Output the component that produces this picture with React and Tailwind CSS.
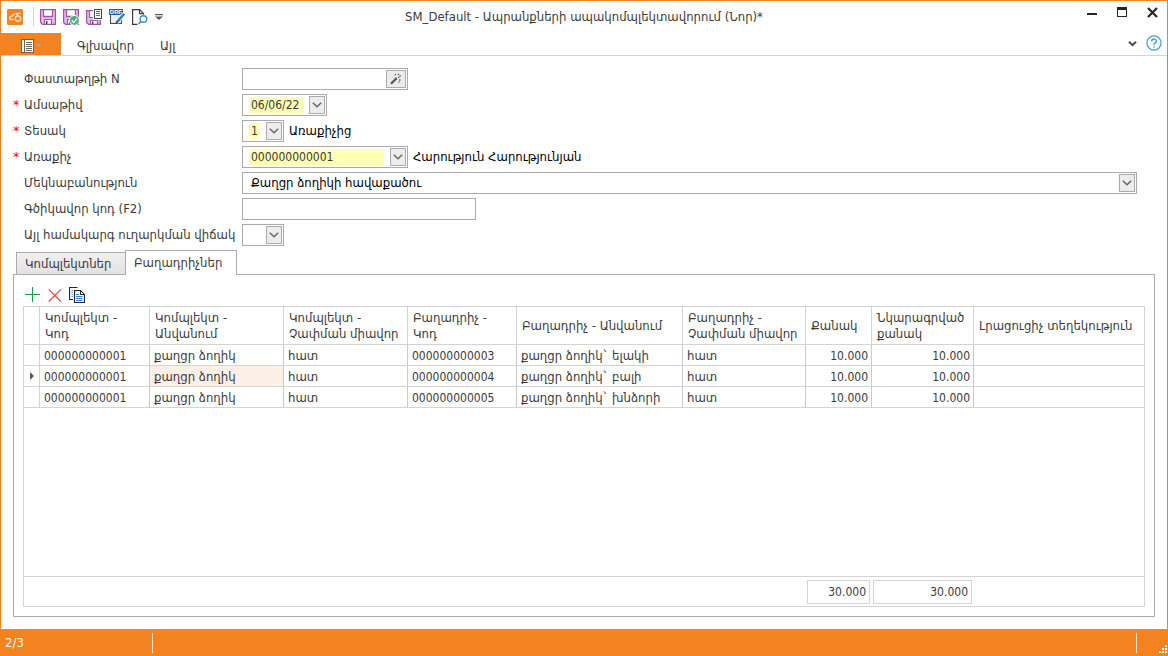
import React from "react";

function LogoIcon() {
  return (
    <svg viewBox="0 0 16 16" className="size-4">
      <rect width="16" height="16" rx="1.5" fill="#f58220" />
      <path d="M7.6 5.2 2.6 8.4 3.2 10.6H7" fill="none" stroke="#fbd9b9" strokeWidth="1.5" />
      <circle cx="11" cy="9.6" r="2.7" fill="none" stroke="#fbd9b9" strokeWidth="1.5" />
      <path d="M8.4 4.4H13.8M9.2 4.6 11 7" fill="none" stroke="#fbd9b9" strokeWidth="1.4" />
    </svg>
  );
}

function Floppy() {
  return (
    <g>
      <path d="M0.6 0.6H15.4V15.4H2.6L0.6 13.4Z" fill="#e3c1e4" stroke="#a056a3" strokeWidth="1.3" />
      <path d="M3.5 0.6H12.5V7.5H3.5Z" fill="#fff" stroke="#a056a3" strokeWidth="1.3" />
      <path d="M4.5 10.5H11.5V15.4H4.5Z" fill="#fff" stroke="#a056a3" strokeWidth="1.2" />
      <rect x="6" y="12" width="1.4" height="3" fill="#3b3b3b" />
    </g>
  );
}

function SaveIcon() {
  return (
    <svg viewBox="0 0 16 16" className="size-4">
      <Floppy />
    </svg>
  );
}

function SaveCheckIcon() {
  return (
    <svg viewBox="0 0 16 16" className="size-4">
      <Floppy />
      <circle cx="11.4" cy="11.4" r="5.3" fill="#fff" />
      <circle cx="11.4" cy="11.4" r="4.5" fill="#4caf7d" />
      <path d="M8.8 11.4 10.8 13.4 14 9.6" fill="none" stroke="#fff" strokeWidth="1.4" />
    </svg>
  );
}

function SaveListIcon() {
  return (
    <svg viewBox="0 0 16 16" className="size-4">
      <path d="M0.6 1.6H14.4V15.4H2.6L0.6 13.4Z" fill="#e3c1e4" stroke="#a056a3" strokeWidth="1.3" />
      <path d="M3.5 1.6H8V8.5H3.5Z" fill="#fff" stroke="#a056a3" strokeWidth="1.2" />
      <path d="M4.5 11.5H11.5V15.4H4.5Z" fill="#fff" stroke="#a056a3" strokeWidth="1.2" />
      <rect x="6" y="12.5" width="1.4" height="2.5" fill="#3b3b3b" />
      <rect x="7" y="0" width="9" height="11" fill="#fff" />
      <rect x="8.5" y="0.5" width="7" height="9" fill="#fff" stroke="#34495e" />
      <path d="M10 2.5H14M10 4.5H14M10 6.5H14" stroke="#2f7fc1" />
    </svg>
  );
}

function DraftIcon() {
  return (
    <svg viewBox="0 0 16 16" className="size-4">
      <rect x="1.5" y="5.5" width="11" height="9" fill="#ededed" stroke="#4a4a4a" />
      <rect width="14" height="6" fill="#1f5f99" />
      <text x="7" y="5.3" textAnchor="middle" fill="#fff" fontSize="6" fontWeight="700" fontFamily="Liberation Sans">
        DRF
      </text>
      <path d="M15 5 7.6 13.4" stroke="#fff" strokeWidth="4.4" />
      <path d="M15.2 4.8 8.2 12.8" stroke="#2f7fc1" strokeWidth="2.6" />
      <path d="M6.2 15 7.2 11.8 9.2 13.6Z" fill="#34495e" />
    </svg>
  );
}

function PreviewIcon() {
  return (
    <svg viewBox="0 0 16 16" className="size-4">
      <path d="M5.5 15.4H0.6V0.6H7.5L11.5 4.6V5.5" fill="none" stroke="#3b3b3b" strokeWidth="1.2" />
      <path d="M7.5 0.6V4.6H11.5" fill="none" stroke="#3b3b3b" strokeWidth="1.2" />
      <circle cx="11.4" cy="10" r="3.3" fill="#fff" stroke="#3d8fc9" strokeWidth="1.4" />
      <path d="M9 12.4 6.6 15" stroke="#3d8fc9" strokeWidth="1.7" />
    </svg>
  );
}

function Chevron() {
  return (
    <svg viewBox="0 0 10 6" className="h-[6px] w-[10px]">
      <path d="M0.8 0.8 5 4.8 9.2 0.8" fill="none" stroke="#666" strokeWidth="1.5" />
    </svg>
  );
}

function WandIcon() {
  return (
    <svg viewBox="0 0 12 12" className="size-3">
      <path d="M1 10.8 6.8 5" stroke="#555" strokeWidth="2.2" />
      <path d="M4.6 1.6H6M7.6 1.4H9.2M9.4 3H10.8M8 4.4H9.4M9 7H10.6M8.6 9H9.6" stroke="#666" strokeWidth="1.4" />
    </svg>
  );
}

const quickTools = [
  ["Պահպանել", SaveIcon],
  ["Պահպանել և հաստատել", SaveCheckIcon],
  ["Պահպանել որպես", SaveListIcon],
  ["Սևագիր", DraftIcon],
  ["Դիտել", PreviewIcon],
];

const stepButton =
  "flex h-[18px] w-4 shrink-0 items-center justify-center border border-[#ababab] bg-[#ececec]";
const fieldBox = "flex h-[22px] items-center border border-[#ababab] bg-white";

function Select({ id, width, textClass, value }) {
  return (
    <div className={`relative ${fieldBox} ${width}`}>
      <select
        id={id}
        defaultValue={value}
        className={`h-4 w-full appearance-none bg-clip-content pr-[23px] pl-[6px] indent-[2px] leading-4 outline-none ${textClass}`}
      >
        <option value={value}>{value}</option>
      </select>
      <span className={`pointer-events-none absolute top-px right-px ${stepButton}`}>
        <Chevron />
      </span>
    </div>
  );
}

function Row({ id, label, required, children }) {
  return (
    <div className="flex h-[22px] items-center">
      <span className="w-[11px] shrink-0 font-['DejaVu_Sans',sans-serif] text-[#f00]">{required ? "*" : ""}</span>
      <label htmlFor={id} className="w-[218px] shrink-0 whitespace-nowrap">
        {label}
      </label>
      {children}
    </div>
  );
}

const columns = [
  ["Կոմպլեկտ - Կոդ", "w-[110px]"],
  ["Կոմպլեկտ - Անվանում", "w-[134px]"],
  ["Կոմպլեկտ - Չափման միավոր", "w-[124px]"],
  ["Բաղադրիչ - Կոդ", "w-[109px]"],
  ["Բաղադրիչ - Անվանում", "w-[166px]"],
  ["Բաղադրիչ - Չափման միավոր", "w-[123px]"],
  ["Քանակ", "w-[66px]"],
  ["Նկարագրված քանակ", "w-[102px]"],
  ["Լրացուցիչ տեղեկություն", ""],
];

const cellStyles = {
  0: "pl-1 text-[12px]",
  3: "pl-1 text-[12px]",
  6: "pr-[3px] text-right text-[12px]",
  7: "pr-[3px] text-right text-[12px]",
};

const rows = [
  ["000000000001", "քաղցր ձողիկ", "հատ", "000000000003", "քաղցր ձողիկ` ելակի", "հատ", "10.000", "10.000", ""],
  ["000000000001", "քաղցր ձողիկ", "հատ", "000000000004", "քաղցր ձողիկ` բալի", "հատ", "10.000", "10.000", ""],
  ["000000000001", "քաղցր ձողիկ", "հատ", "000000000005", "քաղցր ձողիկ` խնձորի", "հատ", "10.000", "10.000", ""],
];

export default function App() {
  return (
    <div className="flex min-h-screen flex-col border-x border-t border-[#f58220] bg-white font-['DejaVu_Sans_Condensed','DejaVu_Sans',sans-serif] text-[13px] leading-4 text-[#3b3b3b]">
      <header className="grid h-8 grid-cols-[1fr_auto_1fr] items-center">
        <div className="flex items-center pl-[6px]">
          <LogoIcon />
          <span className="ml-[10px] mr-[6px] h-5 w-px bg-[#d4d4d4]" />
          <div className="flex items-center gap-[7px]">
            {quickTools.map(([name, Icon]) => (
              <button key={name} type="button" aria-label={name}>
                <Icon />
              </button>
            ))}
            <button type="button" aria-label="Կարգավորել">
              <svg viewBox="0 0 8 6" className="h-[6px] w-2">
                <path d="M0 0H8V1.2H0ZM0 2.4H8L4 6Z" fill="#5a5a5a" />
              </svg>
            </button>
          </div>
        </div>
        <h1>SM_Default - Ապրանքների ապակոմպլեկտավորում (Նոր)*</h1>
        <div className="flex justify-end self-start pt-[6px]">
          <button type="button" aria-label="Ծալել" className="flex w-[30px] justify-center">
            <svg viewBox="0 0 11 11" className="size-[11px]">
              <path d="M0 6H10V8H0Z" fill="#262626" />
            </svg>
          </button>
          <button type="button" aria-label="Մեծացնել" className="flex w-[30px] justify-center">
            <svg viewBox="0 0 11 11" className="size-[11px]" shapeRendering="crispEdges">
              <path d="M0.5 0.5H9.5V9.5H0.5Z" fill="none" stroke="#262626" />
              <path d="M0 0H10V3H0Z" fill="#262626" />
            </svg>
          </button>
          <button type="button" aria-label="Փակել" className="flex w-[30px] justify-center">
            <svg viewBox="0 0 11 11" className="size-[11px]">
              <path d="M1 1 10 10M10 1 1 10" stroke="#262626" strokeWidth="2.2" />
            </svg>
          </button>
        </div>
      </header>

      <nav className="flex h-[23px] items-center border-b border-[#d4d4d4]">
        <button type="button" aria-label="Ցանկ" className="flex h-[22px] w-[60px] items-center gap-[2px] bg-[#f58220] pt-[3px] pl-5">
          <svg viewBox="0 0 13 14" className="h-[14px] w-[13px]" shapeRendering="crispEdges">
            <path d="M0.5 0.5H12.5V13.5H0.5Z" fill="#fff" stroke="#6e6257" />
            <path d="M3.5 0V14" stroke="#6e6257" />
            <path d="M5 3.5H11M5 5.5H11M5 7.5H11M5 9.5H11M5 11.5H11" stroke="#6e6257" />
          </svg>
          <svg viewBox="0 0 5 3" className="h-[3px] w-[5px]">
            <path d="M0 0H5L2.5 3Z" fill="#a8a8a8" />
          </svg>
        </button>
        <a href="#main" className="pt-[3px] pl-4">Գլխավոր</a>
        <a href="#other" className="pt-[3px] pl-[26px]">Այլ</a>
        <button type="button" aria-label="Ծալել ժապավենը" className="ml-auto pr-[9px]">
          <svg viewBox="0 0 9 6" className="h-[6px] w-[9px]">
            <path d="M1 0.8 4.5 4.2 8 0.8" fill="none" stroke="#4a4a4a" strokeWidth="2" />
          </svg>
        </button>
        <button type="button" aria-label="Օգնություն" className="self-start pr-[5px] pt-[2px]">
          <svg viewBox="0 0 16 16" className="size-4">
            <circle cx="8" cy="8" r="7.1" fill="#fff" stroke="#4a9fd8" strokeWidth="1.3" />
            <path
              d="M5.6 6.2C5.6 3.2 10.4 3.2 10.4 6.1C10.4 8 8 7.8 8 10M8 11.2V12.6"
              fill="none"
              stroke="#4a9fd8"
              strokeWidth="1.4"
            />
          </svg>
        </button>
      </nav>

      <main className="flex flex-1 flex-col p-3">
        <form className="flex flex-col gap-1">
          <Row id="doc" label="Փաստաթղթի N">
            <div className={`${fieldBox} w-[166px] pr-px`}>
              <input id="doc" className="h-4 min-w-0 flex-1 px-2 outline-none" />
              <button type="button" aria-label="Լրացնել" className="flex h-[18px] w-5 items-center justify-center border border-[#ababab] bg-[#ececec]">
                <WandIcon />
              </button>
            </div>
          </Row>
          <Row id="date" label="Ամսաթիվ" required>
            <div className={`${fieldBox} w-[85px] pr-px pl-[6px]`}>
              <input id="date" defaultValue="06/06/22" className="mr-[5px] h-4 min-w-0 flex-1 bg-[#ffffb4] pl-[2px] text-[12px] outline-none" />
              <button type="button" aria-label="Ընտրել ամսաթիվը" className={stepButton}>
                <Chevron />
              </button>
            </div>
          </Row>
          <Row id="kind" label="Տեսակ" required>
            <Select id="kind" width="w-[42px]" textClass="bg-[#ffffb4] text-[12px]" value="1" />
            <span className="pl-[5px] text-black">Առաքիչից</span>
          </Row>
          <Row id="sender" label="Առաքիչ" required>
            <Select id="sender" width="w-[166px]" textClass="bg-[#ffffb4] text-[12px]" value="000000000001" />
            <span className="pl-[5px] text-black">Հարություն Հարությունյան</span>
          </Row>
          <Row id="comment" label="Մեկնաբանություն">
            <Select id="comment" width="mr-[18px] flex-1" textClass="text-black" value="Քաղցր ձողիկի հավաքածու" />
          </Row>
          <Row id="barcode" label="Գծիկավոր կոդ (F2)">
            <input id="barcode" className={`${fieldBox} w-[234px] px-2 outline-none`} />
          </Row>
          <Row id="state" label="Այլ համակարգ ուղարկման վիճակ">
            <Select id="state" width="w-[42px]" textClass="" value="" />
          </Row>
        </form>

        <div role="tablist" className="z-10 mt-1 -mb-px flex items-end pl-[3px]">
          <button type="button" role="tab" aria-selected="false" className="h-[23px] w-[109px] border border-r-0 border-[#ababab] bg-linear-to-b from-[#f0f0f0] to-[#e2e2e2] pl-2 text-left whitespace-nowrap">
            Կոմպլեկտներ
          </button>
          <button type="button" role="tab" aria-selected="true" className="h-[25px] w-28 border border-b-0 border-[#ababab] bg-white pl-2 text-left whitespace-nowrap">
            Բաղադրիչներ
          </button>
        </div>

        <section className="flex flex-1 flex-col border border-[#ababab] px-[9px] pt-3 pb-[9px]">
          <div className="flex h-[19px] items-start gap-[7px] pl-[2px]">
            <button type="button" aria-label="Ավելացնել">
              <svg viewBox="0 0 16 16" className="size-4" shapeRendering="crispEdges">
                <path d="M0 7.5H15M7.5 0V15" stroke="#11a04a" />
              </svg>
            </button>
            <button type="button" aria-label="Ջնջել">
              <svg viewBox="0 0 15 16" className="h-4 w-[14px]">
                <path d="M0.8 2 13.8 15M13.8 2 0.8 15" stroke="#e8474a" strokeWidth="1.3" />
              </svg>
            </button>
            <button type="button" aria-label="Պատճենել">
              <svg viewBox="0 0 16 16" className="size-4">
                <path d="M4 12.5H0.5V0.5H8.5" fill="none" stroke="#262626" strokeWidth="1.2" />
                <path d="M2.5 3.5H4M2.5 5.5H4M2.5 7.5H4M2.5 9.5H4" stroke="#5b9bd0" />
                <path d="M5.5 3.5H11.5L15.5 7.5V15.5H5.5Z" fill="#fff" stroke="#262626" strokeWidth="1.2" />
                <path d="M11.5 3.5V7.5H15.5Z" fill="#fff" stroke="#262626" />
                <path d="M7 7.5H10M7 9.5H13.5M7 11.5H13.5M7 13.5H13.5" stroke="#2f7fc1" />
              </svg>
            </button>
          </div>

          <div className="flex flex-1 flex-col border border-[#d4d4d4]">
            <table className="w-full table-fixed border-separate border-spacing-0">
              <thead>
                <tr className="h-[38px]">
                  <th aria-label="Նշիչ" className="w-4 border-r border-b border-[#d4d4d4]" />
                  {columns.map(([title, width]) => (
                    <th key={title} className={`border-r border-b border-[#d4d4d4] py-0 pr-[5px] pl-[5px] text-left font-normal last:border-r-0 ${width}`}>
                      {title}
                    </th>
                  ))}
                </tr>
              </thead>
              <tbody>
                {rows.map((row, r) => (
                  <tr key={r} className="h-[21px]">
                    <td className="border-r border-b border-[#d4d4d4] p-0">
                      {r === 1 && (
                        <svg viewBox="0 0 4 8" className="ml-[6px] h-2 w-1">
                          <path d="M0 0 4 4 0 8Z" fill="#5a5a5a" />
                        </svg>
                      )}
                    </td>
                    {row.map((text, c) => (
                      <td
                        key={c}
                        className={`border-r border-b border-r-[#c3ccd6] border-b-[#d4d4d4] pt-px pb-0 whitespace-nowrap last:border-r-0 ${
                          cellStyles[c] ?? "pl-1"
                        } ${r === 1 && c === 1 ? "bg-[#fcefe6]" : ""}`}
                      >
                        {text}
                      </td>
                    ))}
                  </tr>
                ))}
              </tbody>
            </table>
            <div className="mt-auto grid h-[30px] grid-cols-[783px_66px_99px_1fr] border-t border-[#d4d4d4] pt-[3px] text-[12px]">
              <output className="col-start-2 mr-[3px] flex h-6 items-center justify-end border border-[#d4d4d4] pr-[3px]">30.000</output>
              <output className="flex h-6 items-center justify-end border border-[#d4d4d4] pr-[3px]">30.000</output>
            </div>
          </div>
        </section>
      </main>

      <footer className="flex h-[27px] items-center justify-between bg-[#f58220] text-white">
        <span className="flex h-5 w-[152px] items-center border-r border-[#fde3cc] pl-1">2/3</span>
        <span className="flex h-5 w-[31px] items-end justify-end border-l border-[#fde3cc]">
          <svg viewBox="0 0 8 8" className="size-2" shapeRendering="crispEdges">
            <path d="M6 0H8V2H6ZM3 3H5V5H3ZM6 3H8V5H6ZM0 6H2V8H0ZM3 6H5V8H3ZM6 6H8V8H6Z" fill="#fff" />
          </svg>
        </span>
      </footer>
    </div>
  );
}
